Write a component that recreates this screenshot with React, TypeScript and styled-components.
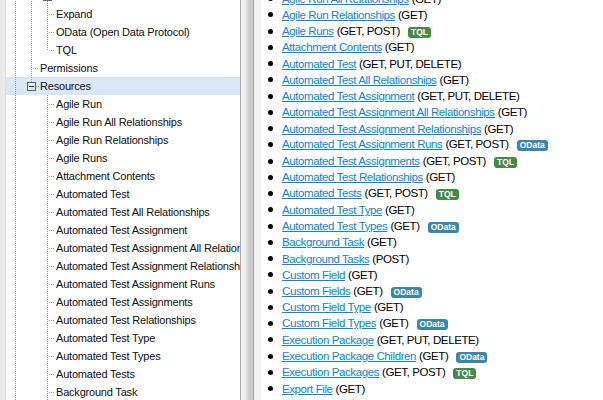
import React from "react";
import styled, { createGlobalStyle } from "styled-components";

const GlobalStyle = createGlobalStyle`
  html, body { margin: 0; padding: 0; overflow: hidden; background: #fff; }
  #root { width: 603px; height: 400px; }
`;

const Page = styled.div`
  display: flex;
  width: 603px;
  height: 400px;
  overflow: hidden;
  background: #fff;
`;

const EdgeStrip = styled.div`
  flex: 0 0 6px;
  background: linear-gradient(to right, #e6e6e6, #ececec 70%, #d9d9d9);
`;

const TreePanel = styled.div`
  flex: 0 0 234px;
  padding-left: 1px;
  box-sizing: border-box;
  overflow: hidden;
  background: #fff;
  font-family: "Liberation Sans", Arial, sans-serif;
  font-size: 11px;
  letter-spacing: -0.2px;
  color: #111;
`;

const TreeList = styled.div`
  display: flex;
  flex-direction: column;
  margin-top: -13px;
`;

const TreeRow = styled.div<{ $selected?: boolean }>`
  display: flex;
  align-items: center;
  height: 18px;
  margin-left: -1px;
  padding-left: 1px;
  white-space: nowrap;
  background: ${(p) => (p.$selected ? "#dae7f6" : "transparent")};
`;

const Cell = styled.svg`
  flex: 0 0 16px;
  width: 16px;
  height: 18px;
  display: block;
`;

const NodeLabel = styled.span`
  margin-left: 1px;
  line-height: 18px;
`;

const Splitter = styled.div`
  flex: 0 0 21px;
  background: linear-gradient(
    to right,
    #a9a9a9 0px,
    #a9a9a9 1px,
    #f1f1f1 1px,
    #ececec 6px,
    #d8d8d8 7px,
    #c6c6c6 10px,
    #cfcfcf 13px,
    #a3a3a3 13px,
    #a3a3a3 14px,
    #f0f0f0 14px,
    #f2f2f2 21px
  );
`;

const Content = styled.div`
  flex: 1;
  overflow: hidden;
  background: #fff;
  font-family: "Liberation Sans", Arial, sans-serif;
  font-size: 11.5px;
  letter-spacing: -0.4px;
  color: #000;
`;

const ResourceList = styled.ul`
  list-style: none;
  margin: -9.4px 0 0 0;
  padding: 0 0 0 7px;
`;

const ResourceItem = styled.li`
  display: flex;
  align-items: center;
  height: 16.26px;
  white-space: nowrap;
`;

const Bullet = styled.span`
  flex: 0 0 5px;
  width: 5px;
  height: 5px;
  border-radius: 50%;
  background: #000;
  margin-right: 9px;
`;

const ResourceLink = styled.a`
  color: #0a86d6;
  text-decoration: underline;
  cursor: pointer;
`;

const Methods = styled.span`
  margin-left: 3px;
`;

const Badge = styled.span<{ $kind: "tql" | "odata" }>`
  display: inline-block;
  margin-left: 8px;
  padding: 0 3px;
  height: 11px;
  line-height: 11px;
  border-radius: 3px;
  font-size: 8.5px;
  font-weight: bold;
  letter-spacing: 0;
  color: #fff;
  background: ${(p) => (p.$kind === "tql" ? "#468847" : "#3a87ad")};
`;

type CellKind = "none" | "through" | "tee" | "end" | "box" | "boxMid";

const DOT = "#9a9a9a";

const TreeCell: React.FC<{ kind: CellKind }> = ({ kind }) => (
  <Cell viewBox="0 0 16 18">
    {(kind === "through" || kind === "tee") && (
      <line x1="8.5" y1="0" x2="8.5" y2="18" stroke={DOT} strokeDasharray="1 1" shapeRendering="crispEdges" />
    )}
    {kind === "end" && (
      <line x1="8.5" y1="0" x2="8.5" y2="10" stroke={DOT} strokeDasharray="1 1" shapeRendering="crispEdges" />
    )}
    {(kind === "tee" || kind === "end") && (
      <line x1="10" y1="9.5" x2="16" y2="9.5" stroke={DOT} strokeDasharray="1 1" shapeRendering="crispEdges" />
    )}
    {(kind === "box" || kind === "boxMid") && (
      <g shapeRendering="crispEdges">
        <line x1="8.5" y1="0" x2="8.5" y2="5" stroke={DOT} strokeDasharray="1 1" />
        {kind === "boxMid" && (
          <line x1="8.5" y1="14" x2="8.5" y2="18" stroke={DOT} strokeDasharray="1 1" />
        )}
        <line x1="13" y1="9.5" x2="16" y2="9.5" stroke={DOT} strokeDasharray="1 1" />
        <defs>
          <linearGradient id="boxfill" x1="0" y1="0" x2="1" y2="1">
            <stop offset="0" stopColor="#ffffff" />
            <stop offset="1" stopColor="#c9d3df" />
          </linearGradient>
        </defs>
        <rect x="4.5" y="5.5" width="8" height="8" fill="url(#boxfill)" stroke="#4f6784" />
        <line x1="6" y1="9.5" x2="11" y2="9.5" stroke="#1d2f4a" />
      </g>
    )}
  </Cell>
);

type TreeNode = { label: string; cells: CellKind[]; selected?: boolean };

const resChild = (label: string): TreeNode => ({ label, cells: ["through", "none", "tee"] });

const treeNodes: TreeNode[] = [
  { label: "", cells: ["through", "through", "boxMid"] },
  { label: "Expand", cells: ["through", "through", "tee"] },
  { label: "OData (Open Data Protocol)", cells: ["through", "through", "tee"] },
  { label: "TQL", cells: ["through", "through", "end"] },
  { label: "Permissions", cells: ["through", "tee"] },
  { label: "Resources", cells: ["through", "box"], selected: true },
  resChild("Agile Run"),
  resChild("Agile Run All Relationships"),
  resChild("Agile Run Relationships"),
  resChild("Agile Runs"),
  resChild("Attachment Contents"),
  resChild("Automated Test"),
  resChild("Automated Test All Relationships"),
  resChild("Automated Test Assignment"),
  resChild("Automated Test Assignment All Relationships"),
  resChild("Automated Test Assignment Relationships"),
  resChild("Automated Test Assignment Runs"),
  resChild("Automated Test Assignments"),
  resChild("Automated Test Relationships"),
  resChild("Automated Test Type"),
  resChild("Automated Test Types"),
  resChild("Automated Tests"),
  resChild("Background Task"),
];

type Resource = { name: string; methods: string; badge?: "tql" | "odata" };

const resources: Resource[] = [
  { name: "Agile Run All Relationships", methods: "(GET)" },
  { name: "Agile Run Relationships", methods: "(GET)" },
  { name: "Agile Runs", methods: "(GET, POST)", badge: "tql" },
  { name: "Attachment Contents", methods: "(GET)" },
  { name: "Automated Test", methods: "(GET, PUT, DELETE)" },
  { name: "Automated Test All Relationships", methods: "(GET)" },
  { name: "Automated Test Assignment", methods: "(GET, PUT, DELETE)" },
  { name: "Automated Test Assignment All Relationships", methods: "(GET)" },
  { name: "Automated Test Assignment Relationships", methods: "(GET)" },
  { name: "Automated Test Assignment Runs", methods: "(GET, POST)", badge: "odata" },
  { name: "Automated Test Assignments", methods: "(GET, POST)", badge: "tql" },
  { name: "Automated Test Relationships", methods: "(GET)" },
  { name: "Automated Tests", methods: "(GET, POST)", badge: "tql" },
  { name: "Automated Test Type", methods: "(GET)" },
  { name: "Automated Test Types", methods: "(GET)", badge: "odata" },
  { name: "Background Task", methods: "(GET)" },
  { name: "Background Tasks", methods: "(POST)" },
  { name: "Custom Field", methods: "(GET)" },
  { name: "Custom Fields", methods: "(GET)", badge: "odata" },
  { name: "Custom Field Type", methods: "(GET)" },
  { name: "Custom Field Types", methods: "(GET)", badge: "odata" },
  { name: "Execution Package", methods: "(GET, PUT, DELETE)" },
  { name: "Execution Package Children", methods: "(GET)", badge: "odata" },
  { name: "Execution Packages", methods: "(GET, POST)", badge: "tql" },
  { name: "Export File", methods: "(GET)" },
];

export default function App() {
  return (
    <>
      <GlobalStyle />
      <Page>
        <EdgeStrip />
        <TreePanel>
          <TreeList>
            {treeNodes.map((n, i) => (
              <TreeRow key={i} $selected={n.selected}>
                {n.cells.map((c, j) => (
                  <TreeCell key={j} kind={c} />
                ))}
                {n.label && <NodeLabel>{n.label}</NodeLabel>}
              </TreeRow>
            ))}
          </TreeList>
        </TreePanel>
        <Splitter />
        <Content>
          <ResourceList>
            {resources.map((r) => (
              <ResourceItem key={r.name}>
                <Bullet />
                <span>
                  <ResourceLink>{r.name}</ResourceLink>
                  <Methods>{r.methods}</Methods>
                  {r.badge && <Badge $kind={r.badge}>{r.badge === "tql" ? "TQL" : "OData"}</Badge>}
                </span>
              </ResourceItem>
            ))}
          </ResourceList>
        </Content>
      </Page>
    </>
  );
}
